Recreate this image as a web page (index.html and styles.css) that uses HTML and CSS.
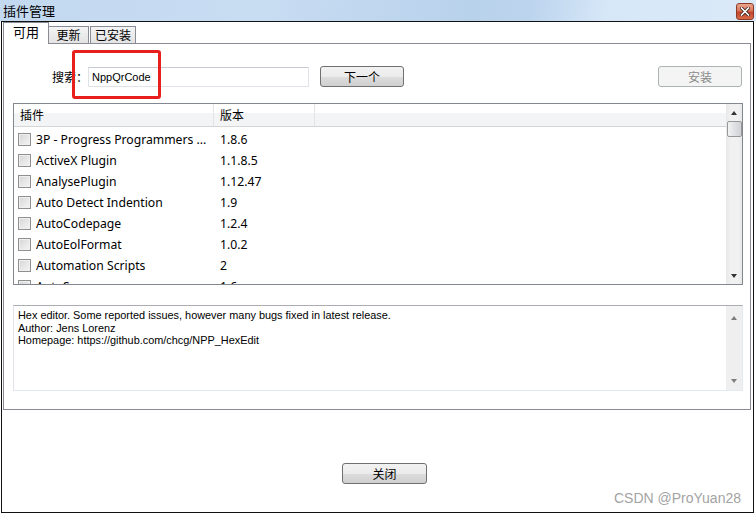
FILE: index.html
```html
<!DOCTYPE html>
<html lang="zh-CN">
<head>
<meta charset="utf-8">
<title>插件管理</title>
<link rel="stylesheet" href="styles.css">
</head>
<body>
<div class="window">
  <div class="titlebar">
    <span class="title">插件管理</span>
    <span class="close-btn"><svg width="10" height="9" viewBox="0 0 10 9"><path d="M1.5 1 L8.5 8 M8.5 1 L1.5 8" stroke="#3a2420" stroke-width="3.2" stroke-linecap="square"/><path d="M1.5 1 L8.5 8 M8.5 1 L1.5 8" stroke="#fff" stroke-width="1.6" stroke-linecap="square"/></svg></span>
  </div>
  <div class="frame">
    <div class="tabs">
      <div class="tab active">可用</div>
      <div class="tab t2">更新</div>
      <div class="tab t3">已安装</div>
    </div>
    <div class="panel">
      <div class="search-row">
        <span class="search-label">搜索：</span>
        <div class="input">NppQrCode</div>
        <div class="btn next">下一个</div>
        <div class="spacer"></div>
        <div class="btn disabled">安装</div>
      </div>
      <div class="list">
        <div class="list-main">
          <div class="list-head">
            <div class="col c1">插件</div>
            <div class="col c2">版本</div>
            <div class="col c3"></div>
          </div>
          <div class="rows">
            <div class="row"><span class="cb"></span><span class="name">3P - Progress Programmers ...</span><span class="ver">1.8.6</span></div>
            <div class="row"><span class="cb"></span><span class="name">ActiveX Plugin</span><span class="ver">1.1.8.5</span></div>
            <div class="row"><span class="cb"></span><span class="name">AnalysePlugin</span><span class="ver">1.12.47</span></div>
            <div class="row"><span class="cb"></span><span class="name">Auto Detect Indention</span><span class="ver">1.9</span></div>
            <div class="row"><span class="cb"></span><span class="name">AutoCodepage</span><span class="ver">1.2.4</span></div>
            <div class="row"><span class="cb"></span><span class="name">AutoEolFormat</span><span class="ver">1.0.2</span></div>
            <div class="row"><span class="cb"></span><span class="name">Automation Scripts</span><span class="ver">2</span></div>
            <div class="row"><span class="cb"></span><span class="name">AutoSave</span><span class="ver">1.6</span></div>
          </div>
        </div>
        <div class="vscroll">
          <div class="arrow up"></div>
          <div class="thumb"></div>
          <div class="track"></div>
          <div class="arrow down"></div>
        </div>
      </div>
      <div class="desc">
        <div class="desc-text">
          <div>Hex editor. Some reported issues, however many bugs fixed in latest release.</div>
          <div>Author: Jens Lorenz</div>
          <div>Homepage: https://github.com/chcg/NPP_HexEdit</div>
        </div>
        <div class="vscroll light">
          <div class="arrow up dim"></div>
          <div class="track"></div>
          <div class="arrow down dim"></div>
        </div>
      </div>
    </div>
    <div class="bottom-row">
      <div class="btn close">关闭</div>
    </div>
  </div>
  <div class="highlight"></div>
  <div class="watermark">CSDN @ProYuan28</div>
</div>
</body>
</html>
```

FILE: styles.css
```css
* { box-sizing: border-box; }
html, body { margin: 0; padding: 0; background: #fff; }
body { width: 756px; height: 514px; overflow: hidden; font-family: "Noto Sans", "Noto Sans CJK SC", sans-serif; color: #000; }

.window { position: relative; width: 756px; height: 514px; }

.titlebar {
  height: 21px;
  display: flex;
  align-items: center;
  justify-content: space-between;
  background: linear-gradient(100deg, #c3d9f0 0%, #c8dcf2 35%, #b9d2ec 62%, #bcd4ee 70%, #d6e7f7 80%, #dbe9f8 100%);
}
.title { font-family: "Noto Sans CJK SC", sans-serif; font-size: 13px; padding-left: 3px; line-height: 21px; }
.close-btn {
  width: 18px; height: 17px;
  margin-right: 2px; margin-top: 1px;
  border: 1px solid #8d3a28; border-radius: 3px;
  background: linear-gradient(#eba48f 0%, #d9775c 45%, #c4452b 55%, #d46b4a 100%);
  display: flex; align-items: center; justify-content: center;
}

.frame {
  margin-left: 1px;
  width: 753px;
  height: 492px;
  border: 1px solid #111;
}

.tabs { display: flex; align-items: flex-end; height: 21px; margin-left: 1px; }
.tab {
  font-family: "Noto Sans CJK SC", sans-serif;
  font-size: 12px;
  height: 17px;
  line-height: 15px;
  border: 1px solid #898c95;
  border-bottom: none;
  background: linear-gradient(#f4f4f4, #e3e3e3);
  text-align: center;
}
.tab.active {
  height: 22px; width: 46px;
  margin-bottom: -1px;
  background: #fff;
  line-height: 18px;
  font-size: 13px;
  position: relative; z-index: 1;
}
.t2 { width: 41px; margin-left: -1px; }
.t3 { width: 46px; margin-left: 1px; }

.panel {
  margin: 0 2px 0 1px;
  border: 1px solid #898c95;
  padding: 22px 7px 18px 9px;
  height: 367px;
}

.search-row { display: flex; align-items: center; height: 21px; }
.search-label {
  font-family: "Noto Sans CJK SC", sans-serif;
  font-size: 12px;
  margin-left: 39px;
  width: 36px;
  white-space: nowrap;
}
.input {
  width: 221px; height: 20px; margin-top: 1px;
  border: 1px solid #dfe3e8;
  border-top-color: #c7cbd1;
  font-family: "Liberation Sans", sans-serif;
  font-size: 11px;
  line-height: 18px;
  padding-left: 3px;
}
.btn {
  width: 84px; height: 21px;
  border: 1px solid #707070;
  border-radius: 3px;
  background: linear-gradient(#f2f2f2 0%, #ebebeb 50%, #dddddd 51%, #cfcfcf 100%);
  font-family: "Noto Sans CJK SC", sans-serif;
  font-size: 12px;
  line-height: 19px;
  text-align: center;
}
.btn.next { margin-left: 11px; }
.spacer { flex: 1; }
.btn.disabled {
  margin-right: 1px;
  border-color: #adb2b5;
  background: #f4f4f4;
  color: #8a8a8a;
}

.list {
  margin-top: 16px;
  height: 182px;
  border: 1px solid #828790;
  display: flex;
  overflow: hidden;
}
.list-main { flex: 1; overflow: hidden; }
.list-head {
  display: flex;
  height: 23px;
  background: linear-gradient(#ffffff 0%, #ffffff 40%, #f3f4f6 41%, #f3f4f6 100%);
  border-bottom: 1px solid #d5d5d5;
  font-family: "Noto Sans CJK SC", sans-serif;
  font-size: 12px;
  line-height: 22px;
}
.col { padding-left: 6px; border-right: 1px solid #e3e4e6; }
.c1 { width: 200px; }
.c2 { width: 101px; }
.c3 { flex: 1; border-right: none; }

.rows { font-size: 12.2px; padding-top: 1.5px; }
.row { display: flex; align-items: center; height: 21px; }
.cb {
  width: 13px; height: 13px;
  margin-left: 4px; margin-top: 1px;
  border: 1px solid #8e8f8f;
  background: linear-gradient(135deg, #d5d5d5 0%, #e6e6e6 50%, #f4f4f4 100%);
  box-shadow: inset 0 0 0 1px #f0f0f0;
}
.name { width: 189px; flex: none; padding-left: 5px; white-space: nowrap; }
.ver { padding-left: 0; }

.vscroll {
  width: 16px;
  display: flex; flex-direction: column;
  background: linear-gradient(90deg, #e8e8e8, #f1f1f1 30%, #f1f1f1 80%, #e6e6e6);
}
.arrow { height: 17px; display: flex; align-items: center; justify-content: center; }
.arrow::before { content: ""; border-left: 3.5px solid transparent; border-right: 3.5px solid transparent; }
.arrow.up::before { border-bottom: 4px solid #333; }
.arrow.down::before { border-top: 4px solid #333; }
.arrow.dim.up::before { border-bottom-color: #7d7d7d; }
.arrow.dim.down::before { border-top-color: #7d7d7d; }
.thumb {
  height: 16px; margin: 0 0 0 1px;
  border: 1px solid #979797;
  border-radius: 2px;
  background: linear-gradient(90deg, #f3f3f3, #e2e3e6 45%, #cfd2d6);
}
.track { flex: 1; }

.desc {
  margin-top: 20px;
  height: 86px;
  border: 1px solid #e3e9ef;
  border-top-color: #abadb3;
  border-left-color: #e2e3ea;
  display: flex;
}
.desc-text {
  flex: 1;
  padding: 3px 0 0 4px;
  font-family: "Liberation Sans", sans-serif;
  font-size: 10.9px;
  line-height: 12.5px;
}
.vscroll.light { background: #efefef; padding: 3px 0 1px; }

.bottom-row { display: flex; margin-top: 53px; }
.btn.close { margin-left: 340px; width: 85px; }

.highlight {
  position: absolute;
  left: 72px; top: 50px;
  width: 89px; height: 49px;
  border: 3px solid #e8201d;
  border-radius: 3px;
}
.watermark {
  position: absolute;
  right: 15px; top: 490px;
  font-family: "Liberation Sans", sans-serif;
  font-size: 14px;
  color: #a3a3a3;
}
```
